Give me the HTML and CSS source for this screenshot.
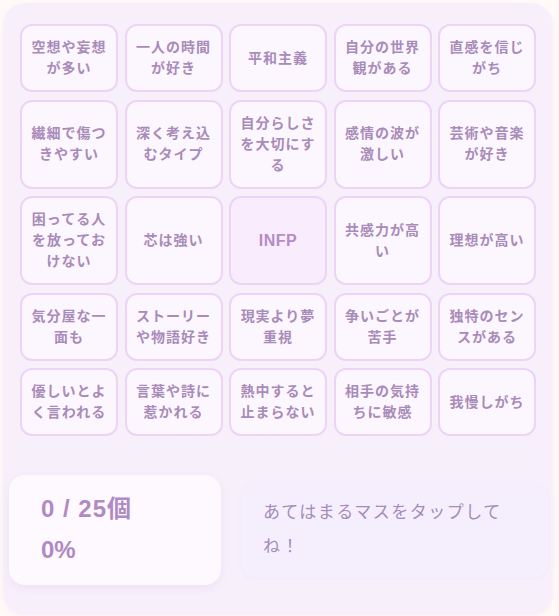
FILE: index.html
```html
<!DOCTYPE html>
<html>
<head>
    <meta charset="utf-8">
    <title>INFPビンゴ</title>
    <link rel="stylesheet" href="styles.css">
</head>
<body>
    <div class="bingo">
        <div class="board">
            <div class="cell">空想や妄想が多い</div>
            <div class="cell">一人の時間が好き</div>
            <div class="cell">平和主義</div>
            <div class="cell">自分の世界観がある</div>
            <div class="cell">直感を信じがち</div>
            <div class="cell">繊細で傷つきやすい</div>
            <div class="cell">深く考え込むタイプ</div>
            <div class="cell">自分らしさを大切にする</div>
            <div class="cell">感情の波が激しい</div>
            <div class="cell">芸術や音楽が好き</div>
            <div class="cell">困ってる人を放っておけない</div>
            <div class="cell">芯は強い</div>
            <div class="cell free">INFP</div>
            <div class="cell">共感力が高い</div>
            <div class="cell">理想が高い</div>
            <div class="cell">気分屋な一面も</div>
            <div class="cell">ストーリーや物語好き</div>
            <div class="cell">現実より夢重視</div>
            <div class="cell">争いごとが苦手</div>
            <div class="cell">独特のセンスがある</div>
            <div class="cell">優しいとよく言われる</div>
            <div class="cell">言葉や詩に惹かれる</div>
            <div class="cell">熱中すると止まらない</div>
            <div class="cell">相手の気持ちに敏感</div>
            <div class="cell">我慢しがち</div>
        </div>
        <div class="result">
            <div class="stats">
                <div class="count">0 / 25個</div>
                <div class="percent">0%</div>
            </div>
            <div class="message">あてはまるマスをタップしてね！</div>
        </div>
    </div>
</body>
</html>
```

FILE: styles.css
```css
html, body{
    margin: 0;
    background: #fffaf7;
}
body{
    padding: 3px;
    font-family: "Liberation Sans", "Noto Sans CJK JP", sans-serif;
}
.bingo{
    box-sizing: border-box;
    width: 550px;
    height: 612px;
    padding: 21px 17px 29px 17px;
    background: #f7f0fb;
    border-radius: 22px;
    box-shadow: 0 2px 8px rgba(230, 200, 240, 0.2);
}
.board{
    display: grid;
    grid-template-columns: repeat(5, 1fr);
    column-gap: 6.5px;
    row-gap: 7.5px;
}
.cell{
    display: flex;
    align-items: center;
    justify-content: center;
    padding: 11px 7px;
    background: #fcf7fe;
    border: 2px solid #edd4f6;
    border-radius: 12px;
    color: #a98bb9;
    font-size: 14px;
    font-weight: bold;
    line-height: 21px;
    letter-spacing: 1px;
    text-align: center;
}
.cell.free{
    background: #f9ecfc;
    color: #b58cc4;
    font-size: 16px;
    letter-spacing: 0.5px;
}
.result{
    display: flex;
    align-items: center;
    gap: 20px;
    margin: 39px -12px 0 -11px;
}
.stats{
    box-sizing: border-box;
    width: 212px;
    height: 110px;
    padding: 16px 32px;
    background: #fdf9ff;
    border-radius: 16px;
    box-shadow: 0 3px 10px rgba(225, 190, 235, 0.3);
    color: #b08ac2;
    font-size: 24px;
    font-weight: bold;
    line-height: 36px;
}
.count{
    letter-spacing: 1px;
}
.percent{
    margin-top: 5px;
}
.message{
    flex: 1;
    box-sizing: border-box;
    height: 94px;
    padding: 13px 20px 13px 22px;
    background: #f5effd;
    border-radius: 14px;
    box-shadow: 0 1px 4px rgba(230, 205, 240, 0.25);
    color: #a48db8;
    font-size: 17px;
    line-height: 34px;
    letter-spacing: 1.5px;
}
```
